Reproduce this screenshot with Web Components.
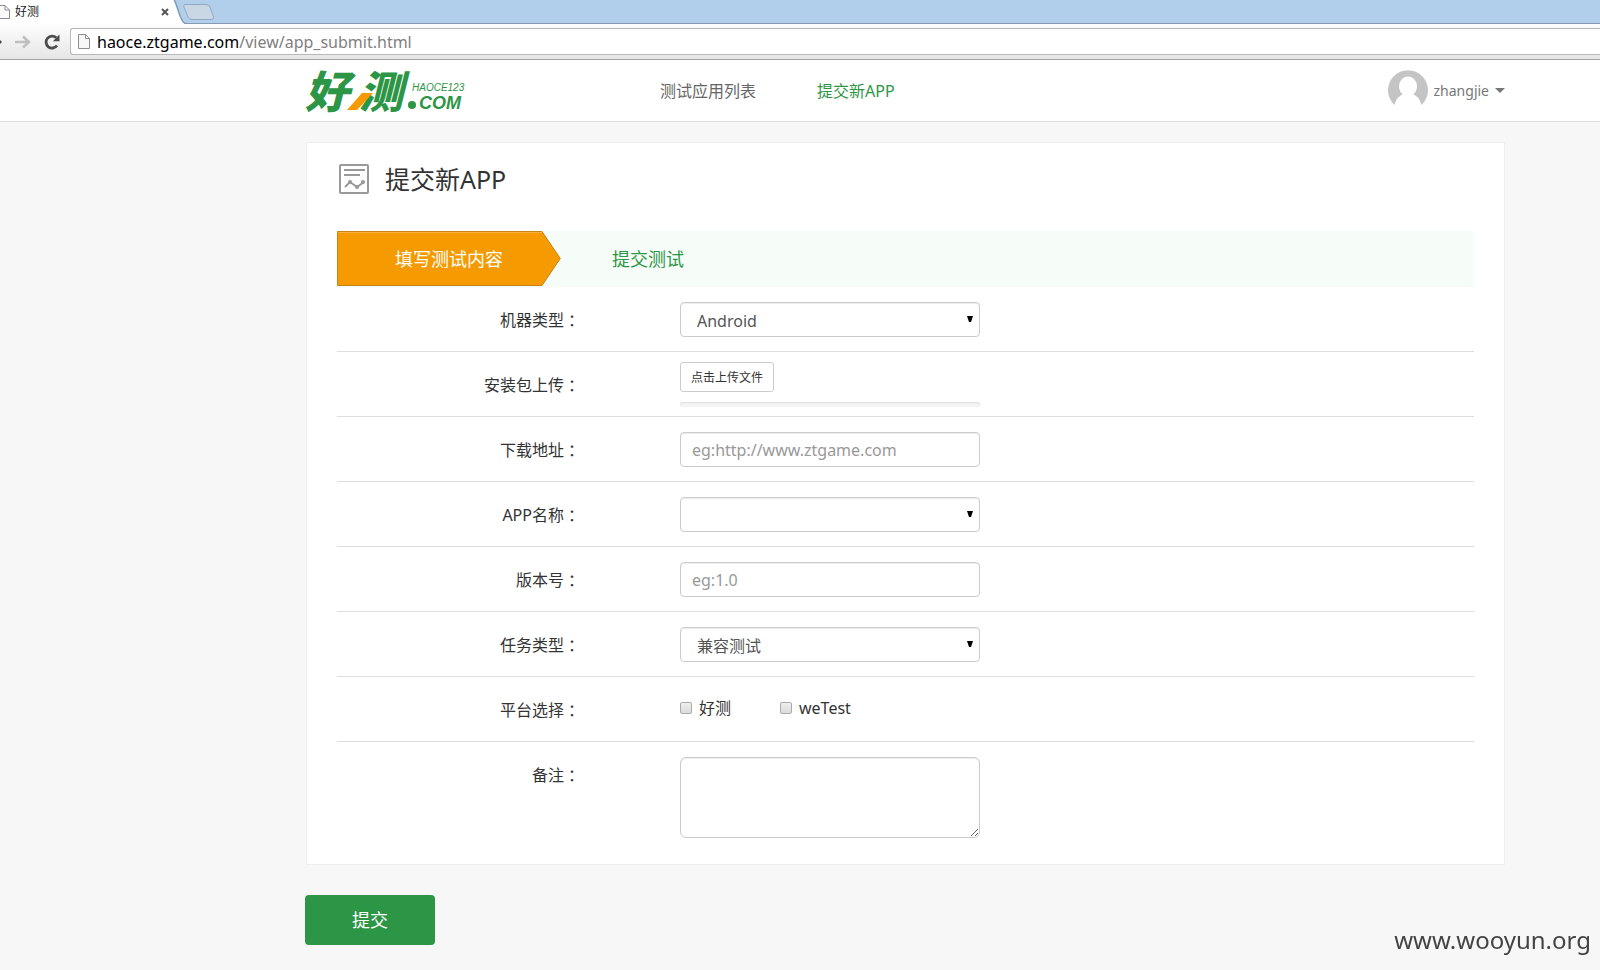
<!DOCTYPE html>
<html lang="zh-CN">
<head>
<meta charset="utf-8">
<title>好测</title>
<style>
  html { background: #f7f7f7; }
  body { margin: 0; font: 16px/24px "Noto Sans", "Noto Sans CJK SC", sans-serif; color: #333; }
</style>
</head>
<body>
<browser-bar></browser-bar>
<site-header user="zhangjie"></site-header>
<app-submit></app-submit>
<water-mark>www.wooyun.org</water-mark>

<script>
const define = (name, html) => {
  const template = document.createElement('template');
  template.innerHTML = html;
  customElements.define(name, class extends HTMLElement {
    constructor() {
      super();
      this.attachShadow({ mode: 'open' }).append(template.content.cloneNode(true));
    }
    connectedCallback() {
      const user = this.shadowRoot.querySelector('[data-user]');
      if (user) user.textContent = this.getAttribute('user');
    }
  });
};

define('browser-bar', `
  <style>
    :host { display: block; }
    .tabs { display: flex; height: 24px; background: #b1ceeb; border-bottom: 1px solid #8499b3; box-sizing: border-box; }
    .tab { display: flex; align-items: center; width: 173px; height: 24px; background: #fff; font-size: 12px; color: #222; }
    .tab svg { flex: none; }
    .tab span { flex: 1; padding-left: 5px; }
    button { border: 0; background: none; padding: 0; display: flex; }
    .close { margin-right: 4px; }
    .edge { flex: none; display: block; }
    .new { margin: 4px 0 0 -4px; align-self: flex-start; }
    .tools { display: flex; align-items: center; height: 36px; box-sizing: border-box; background: linear-gradient(#fdfdfd, #e6e6e6); border-bottom: 1px solid #a5a5a5; }
    .nav { display: flex; align-items: center; width: 70px; gap: 13px; }
    .url { flex: 1; display: flex; align-items: center; height: 27px; box-sizing: border-box; background: #fff; border: 1px solid #b8b8b8; border-right: 0; border-radius: 3px 0 0 3px; padding-left: 7px; gap: 7px; color: #000; white-space: pre; }
    .url i { font-style: normal; color: #808080; }
  </style>
  <div class="tabs">
    <div class="tab">
      <svg width="10" height="14" viewBox="0 0 10 14"><path d="M-3 .5H5L9.500 5V13.500H-3M5 .5V5H9.500" fill="#fafafa" stroke="#8e8e8e"/></svg>
      <span>好测</span>
      <button class="close" aria-label="关闭标签页"><svg width="8" height="8" viewBox="0 0 8 8"><path d="M1 1l6 6M7 1L1 7" stroke="#555" stroke-width="2"/></svg></button>
    </div>
    <svg class="edge" width="14" height="24" viewBox="0 0 14 24"><path d="M0 0H1C4 3 7 22 12 23.500L14 24H0z" fill="#fff"/><path d="M1 0C4 3 7 22 12 23.500H14" fill="none" stroke="#8499b3" stroke-width="1.500"/></svg>
    <button class="new" aria-label="新标签页"><svg width="32" height="17" viewBox="0 0 32 17"><path d="M2 .5H23Q26 .5 27 3L30.500 13Q31 15.500 28 15.500H9Q6 15.500 5 13L.8 2.500Q.5 .5 2 .5z" fill="#c9d6e4" stroke="#92a9c4"/></svg></button>
  </div>
  <div class="tools">
    <div class="nav">
      <svg width="2" height="4"><path d="M0 0L2 2L0 4z" fill="#444"/></svg>
      <button aria-label="前进"><svg width="16" height="14" viewBox="0 0 16 14"><path d="M0 7H14M8 1.500L14 7L8 12.500" fill="none" stroke="#bfbfbf" stroke-width="2.500"/></svg></button>
      <button aria-label="重新加载"><svg width="16" height="16" viewBox="0 0 16 16"><path d="M13 11.500A6 6 0 1 1 12.300 3.800" fill="none" stroke="#4d4d4d" stroke-width="2.800"/><path d="M15.500 .5V7.200H8.800z" fill="#4d4d4d"/></svg></button>
    </div>
    <div class="url">
      <svg width="12" height="15" viewBox="0 0 12 15"><path d="M.5 .5H7.500L11.500 4.500V14.500H.5zM7.500 .5V4.500H11.500" fill="#f7f7f7" stroke="#8e8e8e"/></svg>
      <span>haoce.ztgame.com<i>/view/app_submit.html</i></span>
    </div>
  </div>`);

define('haoce-logo', `
  <style>
    :host { display: block; }
    svg { display: block; overflow: visible; }
    text { font-family: "Liberation Sans", "Noto Sans CJK SC", sans-serif; font-style: italic; fill: #2d9646; }
    .name { font: italic 900 44px "Noto Sans CJK SC", sans-serif; }
  </style>
  <svg width="168" height="48" viewBox="0 0 168 48" role="img" aria-label="好测 HAOCE123.COM">
    <text class="name" x="0 54" y="41">好测</text>
    <path d="M42 43L57 26H68L52 43z" fill="#f79a05"/>
    <text x="107" y="24" font-size="10">HAOCE123</text>
    <circle cx="107" cy="38" r="4" fill="#2d9646"/>
    <text x="114" y="42" font-size="18" font-weight="700">COM</text>
  </svg>`);

define('site-header', `
  <style>
    :host { display: block; background: #fff; border-bottom: 1px solid #ddd; }
    header { display: flex; align-items: center; height: 61px; margin: 0 95px 0 305px; }
    a { text-decoration: none; color: #666; }
    nav { flex: 1; display: flex; gap: 61px; padding-left: 187px; }
    nav a.on { color: #2d9646; }
    button { display: flex; align-items: center; gap: 6px; border: 0; padding: 0; background: none; font: 14px/24px "Noto Sans", sans-serif; color: #777; }
  </style>
  <header>
    <a href="#"><haoce-logo></haoce-logo></a>
    <nav><a href="#">测试应用列表</a><a class="on" href="#">提交新APP</a></nav>
    <button>
      <svg width="40" height="42" viewBox="0 0 40 42"><path d="M6.500 35A20 20 0 1 1 33.500 35C32 29 29 26 25.500 24.500A9 10 0 1 0 14.500 24.500C11 26 8 29 6.500 35z" fill="#c4c4c4"/></svg>
      <span data-user></span>
      <svg width="10" height="5"><path d="M0 0H10L5 5z" fill="#777"/></svg>
    </button>
  </header>`);

define('step-bar', `
  <style>
    :host { display: flex; height: 56px; background: #f6fdf9; font-size: 18px; line-height: 56px; }
    .now { display: grid; width: 224px; color: #fff; }
    .now > * { grid-area: 1 / 1; }
    .now span { padding-left: 58px; }
    .next { padding-left: 51px; color: #2d9646; }
  </style>
  <div class="now">
    <svg width="224" height="55" viewBox="0 0 224 55"><path d="M.5 .5H205L223.300 27.500L205 54.500H.5z" fill="#f59a00" stroke="#c98310"/><path d="M1 1.500H205" stroke="#f9b13c"/></svg>
    <span>填写测试内容</span>
  </div>
  <div class="next">提交测试</div>`);

define('form-row', `
  <style>
    :host { display: grid; grid-template-columns: 243px minmax(0, 300px); column-gap: 100px; padding: 15px 0 14px; min-height: 35px; border-bottom: 1px solid #ddd; }
    :host([last]) { border-bottom: 0; padding-bottom: 26px; }
    :host([compact]) { padding: 10px 0 9px; min-height: 45px; }
    .label { display: flex; justify-content: flex-end; height: 35px; line-height: 37px; }
    :host([compact]) .label { padding-top: 5px; }
    .colon { font-family: "Noto Sans CJK TC", sans-serif; }
  </style>
  <div class="label"><slot name="label"></slot><span class="colon" lang="zh-TW">：</span></div>
  <div><slot></slot></div>`);

define('select-box', `
  <style>
    :host { display: block; position: relative; }
    svg { position: absolute; right: 7px; top: 14px; pointer-events: none; }
  </style>
  <slot></slot>
  <svg width="6" height="7"><path d="M0 0H6L4 6H2z" fill="#000"/></svg>`);

define('app-submit', `
  <style>
    :host { display: block; margin: 20px 95px 0 305px; }
    .card { margin: 0 0 0 1px; padding: 0 30px; background: #fff; border: 1px solid #eee; }
    h1 { display: flex; align-items: center; gap: 16px; margin: 0; height: 88px; box-sizing: border-box; font-size: 25px; font-weight: 400; line-height: 32px; padding: 0 0 16px 2px; }
    label { color: #333; }
    input, select, textarea { display: block; box-sizing: border-box; width: 100%; margin: 0; border: 1px solid #ccc; border-radius: 4px; background: #fff; box-shadow: inset 0 1px 1px rgba(0,0,0,.075); font: 16px/24px "Noto Sans", "Noto Sans CJK SC", sans-serif; color: #555; }
    input, select { height: 35px; }
    input { padding: 0 11px; }
    input::placeholder { color: #999; opacity: 1; }
    select { appearance: none; padding: 2px 24px 0 16px; }
    textarea { height: 81px; border-radius: 6px; padding: 6px 11px; }
    .upload { display: block; height: 30px; width: 94px; box-sizing: border-box; padding: 1px 0 0; border: 1px solid #ccc; border-radius: 3px; background: #fff; font: 12px/18px "Noto Sans", "Noto Sans CJK SC", sans-serif; color: #333; }
    .bar { height: 5px; margin-top: 10px; background: #f5f5f5; border-radius: 3px; box-shadow: inset 0 1px 2px rgba(0,0,0,.1); }
    .checks { display: flex; line-height: 32px; }
    .checks label { display: flex; align-items: center; gap: 7px; width: 100px; }
    input[type=checkbox] { appearance: none; width: 12px; height: 12px; padding: 0; border: 1px solid #aaa; border-radius: 2px; background: linear-gradient(#eee, #dcdcdc); box-shadow: none; }
    .submit { display: block; width: 130px; height: 50px; margin-top: 30px; border: 0; border-radius: 4px; background: #2d9646; color: #fff; font: 18px/24px "Noto Sans", "Noto Sans CJK SC", sans-serif; }
  </style>
  <form onsubmit="return false">
    <div class="card">
      <h1>
        <svg width="30" height="30" viewBox="0 0 30 30" fill="none" stroke="#999" stroke-width="2"><rect x="1" y="1" width="28" height="28" rx="1"/><path d="M5 6H26M5 11H21M6 23L11 18L18 23L25 18"/><g fill="#999" stroke="none"><circle cx="11" cy="18" r="2"/><circle cx="18" cy="23" r="2"/><circle cx="24" cy="18" r="2"/></g></svg>
        提交新APP
      </h1>
      <step-bar></step-bar>
      <form-row><label slot="label" for="os">机器类型</label><select-box><select id="os"><option>Android</option><option>iOS</option></select></select-box></form-row>
      <form-row compact><label slot="label" for="pkg">安装包上传</label><button class="upload" id="pkg" type="button">点击上传文件</button><div class="bar"></div></form-row>
      <form-row><label slot="label" for="url">下载地址</label><input id="url" type="text" placeholder="eg:http://www.ztgame.com"></form-row>
      <form-row><label slot="label" for="app">APP名称</label><select-box><select id="app"><option></option></select></select-box></form-row>
      <form-row><label slot="label" for="ver">版本号</label><input id="ver" type="text" placeholder="eg:1.0"></form-row>
      <form-row><label slot="label" for="task">任务类型</label><select-box><select id="task"><option>兼容测试</option></select></select-box></form-row>
      <form-row><span slot="label">平台选择</span><div class="checks" role="group" aria-label="平台选择"><label><input type="checkbox">好测</label><label><input type="checkbox">weTest</label></div></form-row>
      <form-row last><label slot="label" for="note">备注</label><textarea id="note"></textarea></form-row>
    </div>
    <button class="submit">提交</button>
  </form>`);

define('water-mark', `
  <style>
    :host { position: fixed; right: 9px; bottom: 14px; font-size: 24px; line-height: 32px; color: #444; }
  </style>
  <slot></slot>`);
</script>
</body>
</html>
